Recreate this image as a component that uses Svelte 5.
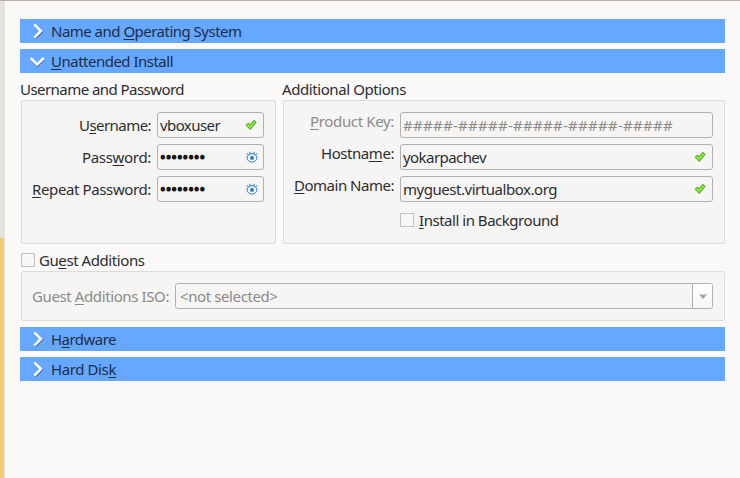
<script>
  // Spreads glyphs so that a label keeps its intended advance width.
  function fit(node, width) {
    const natural = node.getBoundingClientRect().width;
    const spacing = (width - natural) / node.textContent.length;
    node.style.letterSpacing = `${spacing}px`;
  }
</script>

{#snippet label(before, key, after, width)}<span class="text" use:fit={width}>{before}<span class="key">{key}</span>{after}</span>{/snippet}

{#snippet bar(open, before, key, after, width)}
  <header class="bar">
    <svg class="chevron" width="16" height="16" viewBox="0 0 16 16">
      {#if open}
        <path class="shade" d="M2 6 8.5 12.6 15 6" /><path d="M1.6 5 8.2 11.5 14.8 5" />
      {:else}
        <path class="shade" d="M6.2 2.1 12.9 8.7 6.2 15.3" /><path d="M5.3 1.3 12 8 5.3 14.7" />
      {/if}
    </svg>
    {@render label(before, key, after, width)}
  </header>
{/snippet}

{#snippet check()}
  <svg class="icon" width="12" height="12" viewBox="0 0 12 12">
    <path d="M1 6.3 3.2 4.1 5 5.6 8.9 1.3 11.2 3.3 5.3 10.6Z" fill="#76dc32" stroke="#4e9430" stroke-width=".9" stroke-linejoin="round" />
    <path d="M2.4 6.1 5.2 8 9.4 3" fill="none" stroke="#8bea3e" stroke-width="1.3" />
  </svg>
{/snippet}

{#snippet eye()}
  <svg class="icon eye" width="12" height="12" viewBox="0 0 12 12" fill="none" stroke="#1a6fd9">
    <ellipse cx="6" cy="6.9" rx="4.9" ry="4.2" stroke-width=".9" />
    <path d="M.8 2.2 2.3 4M3.8 .8 4.2 2.8M8.2 .8 7.8 2.8M11.2 2.2 9.7 4" stroke-width="1" />
    <circle cx="6" cy="6.9" r="1.9" fill="#1a6fd9" stroke="none" />
  </svg>
{/snippet}

<div class="window">
  <div class="edge"><div class="wall"></div><div class="yellow"></div></div>
  <main>
    {@render bar(false, 'Name and ', 'O', 'perating System', 190.5)}
    {@render bar(true, '', 'U', 'nattended Install', 122)}
    <div class="columns">
      <section>
        <div class="title">{@render label('Username and Password', '', '', 164)}</div>
        <div class="group credentials">
          <div class="caption">{@render label('U', 's', 'ername:', 72)}</div>
          <div class="field"><span class="text" use:fit={60}>vboxuser</span>{@render check()}</div>
          <div class="caption">{@render label('Pass', 'w', 'ord:', 69)}</div>
          <div class="field"><span class="text dots">••••••••</span>{@render eye()}</div>
          <div class="caption">{@render label('', 'R', 'epeat Password:', 119)}</div>
          <div class="field"><span class="text dots">••••••••</span>{@render eye()}</div>
        </div>
      </section>
      <section>
        <div class="title second">{@render label('Additional Options', '', '', 124)}</div>
        <div class="group options">
          <div class="caption off">{@render label('', 'P', 'roduct Key:', 84)}</div>
          <div class="field off"><span class="text" use:fit={270}>#####-#####-#####-#####-#####</span></div>
          <div class="caption">{@render label('Hostna', 'm', 'e:', 73)}</div>
          <div class="field"><span class="text" use:fit={83}>yokarpachev</span>{@render check()}</div>
          <div class="caption">{@render label('', 'D', 'omain Name:', 100)}</div>
          <div class="field"><span class="text" use:fit={154}>myguest.virtualbox.org</span>{@render check()}</div>
          <div class="toggle"><b class="box"></b>{@render label('', 'I', 'nstall in Background', 139.5)}</div>
        </div>
      </section>
    </div>
    <div class="toggle guest"><b class="box"></b>{@render label('Gu', 'e', 'st Additions', 105.5)}</div>
    <div class="group iso">
      <div class="off">{@render label('Guest ', 'A', 'dditions ISO:', 137)}</div>
      <div class="combo off">
        <span class="text" use:fit={97.5}>&lt;not selected&gt;</span>
        <div class="arrow"><svg width="8" height="5" viewBox="0 0 8 5"><path d="M0 .5H8L4.5 4.5H3.5Z" fill="#a6a5a4" /></svg></div>
      </div>
    </div>
    {@render bar(false, 'H', 'a', 'rdware', 65)}
    {@render bar(false, 'Hard Dis', 'k', '', 65)}
  </main>
</div>

<style>
  :global(body) { margin: 0; background: #faf9f8; }
  .window {
    box-sizing: border-box; width: 740px; height: 478px; border-top: 1px solid #b8aea5;
    display: flex; overflow: hidden; background: #faf9f8; color: #2b2d2f;
    font: 15px/20px "Noto Sans", sans-serif;
  }
  .edge { width: 5px; display: flex; flex-direction: column; background: #e9e7e3; }
  .wall { height: 237px; background: #e3e1db; }
  .yellow { flex: 1; width: 4px; background: #f1cb70; }
  main { width: 705px; padding: 18px 15px 0; display: flex; flex-direction: column; }
  .text { white-space: pre; }
  .key { text-decoration: underline 1px; text-underline-offset: 2px; text-decoration-skip-ink: none; }
  .bar { height: 24px; flex: none; display: flex; align-items: center; background: #66a7ff; margin-bottom: 6px; color: #1d2e43; }
  .chevron { margin: 0 6px 0 9px; fill: none; stroke: #fff; stroke-width: 2.6; }
  .chevron .shade { stroke: #365d91; stroke-width: 2.2; }
  .columns { display: flex; gap: 7px; }
  section:first-child { width: 256px; }
  section:last-child { width: 442px; }
  .title { height: 21px; box-sizing: border-box; }
  .title.second { margin-left: -1px; }
  .group { box-sizing: border-box; border: 1px solid #dddcdb; border-radius: 2px; background: #f6f5f4; }
  .credentials, .options { height: 144px; display: grid; align-content: start; gap: 6px; padding: 11px 11px 0 0; }
  .credentials { grid-template-columns: 124px 107px; margin-left: 1px; padding-left: 5px; }
  .options { grid-template-columns: 105px 313px; padding-left: 5px; }
  .caption { text-align: right; line-height: 26px; }
  .options .caption { line-height: 18px; }
  .field { box-sizing: border-box; height: 26px; border: 1px solid #b1b0ae; border-radius: 3px; display: flex; align-items: center; justify-content: space-between; padding: 0 6px 0 2px; }
  .off { color: #8b8a89; }
  .icon { flex: none; }
  .eye { margin-right: -1px; }
  .dots { color: #111; -webkit-text-stroke: 1px #111; }
  .toggle { display: flex; align-items: center; gap: 5px; }
  .options .toggle { grid-column: 2; height: 24px; }
  .box { box-sizing: border-box; width: 14px; height: 14px; border: 1px solid #c3c2c0; background: #f8f7f6; }
  .guest { height: 27px; box-sizing: border-box; padding: 5px 0 0 1px; gap: 4px; }
  .iso { height: 50px; margin: 0 0 6px 1px; padding-left: 10px; display: flex; align-items: center; }
  .combo { box-sizing: border-box; width: 538px; height: 26px; margin-left: 6px; border: 1px solid #b1b0ae; border-radius: 3px; display: flex; justify-content: space-between; align-items: center; padding-left: 4px; }
  .arrow { width: 19px; height: 24px; border-left: 1px solid #b1b0ae; display: flex; align-items: center; justify-content: center; background: linear-gradient(#fff, #f7f6f5); border-radius: 0 2px 2px 0; }
</style>
